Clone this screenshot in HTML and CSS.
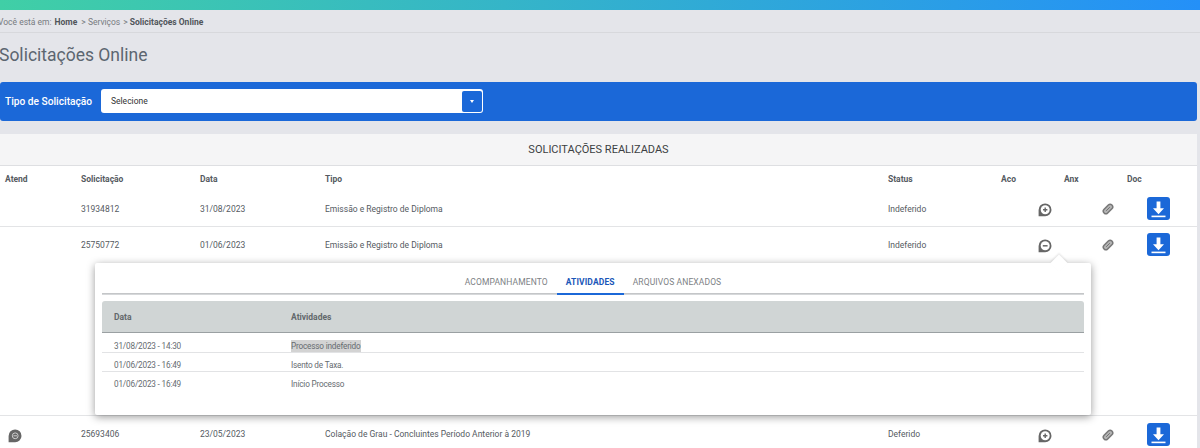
FILE: index.html
```html
<!DOCTYPE html>
<html lang="pt-BR">
<head>
<meta charset="utf-8">
<title>Solicitações Online</title>
<link rel="stylesheet" href="styles.css">
</head>
<body>
<svg class="defs" width="0" height="0" aria-hidden="true">
  <defs>
    <symbol id="clip" viewBox="0 0 16 16">
      <g transform="rotate(-45 8 8)">
        <rect x="0.6" y="4.6" width="14.8" height="6.8" rx="3.4" fill="#b4b4b4" stroke="#777" stroke-width="2"/>
        <path d="M4.5 8h7" stroke="#6f6f6f" stroke-width="1.2"/>
      </g>
    </symbol>
    <symbol id="dl" viewBox="0 0 23 23">
      <rect width="23" height="23" rx="3" fill="#1b68d8"/>
      <path d="M9.6 4.5h3.8v6.7h3.6l-5.5 6-5.5-6h3.6z" fill="#fff"/>
      <rect x="4.5" y="18.6" width="14" height="1.6" fill="#fff"/>
    </symbol>
    <symbol id="plus" viewBox="0 0 14 14">
      <path d="M7.2 .4a6.4 6.4 0 1 1-.2 12.8H.6V7A6.5 6.5 0 0 1 7.2 .4z" fill="#666"/>
      <circle cx="7.2" cy="6.8" r="4.5" fill="#fff"/>
      <path d="M5 6.8h4.4M7.2 4.6V9" stroke="#666" stroke-width="1.4"/>
    </symbol>
    <symbol id="minus" viewBox="0 0 14 14">
      <path d="M7.2 .4a6.4 6.4 0 1 1-.2 12.8H.6V7A6.5 6.5 0 0 1 7.2 .4z" fill="#666"/>
      <circle cx="7.2" cy="6.8" r="4.5" fill="#fff"/>
      <path d="M4.8 6.8h4.8" stroke="#666" stroke-width="1.5"/>
    </symbol>
    <symbol id="atend" viewBox="0 0 14 14">
      <path d="M7.2 .4a6.4 6.4 0 1 1-.2 12.8H.6V7A6.5 6.5 0 0 1 7.2 .4z" fill="#666"/>
      <circle cx="7.2" cy="6.8" r="2.9" fill="none" stroke="#ccc" stroke-width="1"/>
      <path d="M5.4 6.8h3.6" stroke="#ccc" stroke-width="1"/>
    </symbol>
  </defs>
</svg>

<div class="topbar"></div>

<nav class="crumbs">
  <span>Você está em:</span>
  <strong class="crumb-home">Home</strong>
  <span>&gt; Serviços</span>
  <span>&gt; <strong>Solicitações Online</strong></span>
</nav>

<h1 class="title">Solicitações Online</h1>

<section class="filter">
  <label class="filter-label">Tipo de Solicitação</label>
  <div class="select">
    <span class="select-text">Selecione</span>
    <span class="select-btn"><i class="caret"></i></span>
  </div>
</section>

<section class="panel">
  <h2 class="panel-head">SOLICITAÇÕES REALIZADAS</h2>

  <div class="row row-head">
    <span>Atend</span><span>Solicitação</span><span>Data</span><span>Tipo</span><span>Status</span><span>Aco</span><span>Anx</span><span>Doc</span>
  </div>

  <div class="row row-body row-first">
    <span></span><span>31934812</span><span>31/08/2023</span><span>Emissão e Registro de Diploma</span><span>Indeferido</span>
    <svg class="ic-bubble"><use href="#plus"/></svg>
    <svg class="ic-clip"><use href="#clip"/></svg>
    <svg class="ic-dl"><use href="#dl"/></svg>
  </div>

  <div class="row row-body row-open">
    <span></span><span>25750772</span><span>01/06/2023</span><span>Emissão e Registro de Diploma</span><span>Indeferido</span>
    <svg class="ic-bubble"><use href="#minus"/></svg>
    <svg class="ic-clip"><use href="#clip"/></svg>
    <svg class="ic-dl"><use href="#dl"/></svg>
  </div>

  <div class="detail">
    <i class="arrow"></i>
    <div class="tabs">
      <span class="tab">ACOMPANHAMENTO</span>
      <span class="tab tab-active">ATIVIDADES</span>
      <span class="tab">ARQUIVOS ANEXADOS</span>
    </div>
    <div class="act act-head"><span>Data</span><span>Atividades</span></div>
    <div class="act act-row"><span>31/08/2023 - 14:30</span><span><mark>Processo indeferido</mark></span></div>
    <div class="act act-row"><span>01/06/2023 - 16:49</span><span>Isento de Taxa.</span></div>
    <div class="act act-row act-last"><span>01/06/2023 - 16:49</span><span>Início Processo</span></div>
  </div>

  <div class="row row-body row-last">
    <svg class="ic-atend"><use href="#atend"/></svg>
    <span>25693406</span><span>23/05/2023</span><span>Colação de Grau - Concluintes Período Anterior à 2019</span><span>Deferido</span>
    <svg class="ic-bubble"><use href="#plus"/></svg>
    <svg class="ic-clip"><use href="#clip"/></svg>
    <svg class="ic-dl"><use href="#dl"/></svg>
  </div>
</section>
</body>
</html>
```
FILE: styles.css
```css
* { box-sizing: border-box; }
html, body { height: 100%; }
body {
  margin: 0;
  background: #e4e5ea;
  font-family: Roboto, "Liberation Sans", sans-serif;
  color: #555a5f;
  overflow: hidden;
}
.defs { display: block; height: 0; }
.topbar {
  height: 10px;
  background: linear-gradient(90deg, #40cfa6 0%, #35b5c8 42%, #2490f8 100%);
}
.crumbs {
  height: 23px;
  display: flex;
  align-items: center;
  gap: 3px;
  padding-top: 2px;
  border-bottom: 1px solid #d7d8dc;
  font-size: 8.5px;
  color: #777b80;
  margin-left: -2px;
}
.crumbs strong { color: #50555a; font-weight: 700; }
.crumbs .crumb-home { margin-right: 1px; }
.title {
  margin: 0 0 0 -1px;
  height: 49px;
  display: flex;
  align-items: center;
  padding-bottom: 6px;
  font-size: 17.5px;
  font-weight: 400;
  color: #5c6670;
}
.filter {
  width: 1197px;
  height: 39px;
  display: flex;
  align-items: center;
  padding-left: 5px;
  background: #1b68d8;
  border-radius: 3px;
}
.filter-label { color: #fff; font-size: 10.2px; font-weight: 500; width: 95px; white-space: nowrap; }
.select {
  width: 382px;
  height: 24px;
  margin-left: 1px;
  display: flex;
  align-items: center;
  justify-content: space-between;
  background: #fff;
  border-radius: 3px;
  padding-left: 10px;
  margin-top: -1px;
}
.select-text { font-size: 8.5px; color: #333; margin-top: -1px; }
.select-btn {
  width: 20px;
  height: 21px;
  margin-right: 1px;
  display: flex;
  align-items: center;
  justify-content: center;
  background: #1b68d8;
  border-radius: 2px;
}
.caret {
  width: 0;
  height: 0;
  border-left: 2.5px solid transparent;
  border-right: 2.5px solid transparent;
  border-top: 3px solid #fff;
}
.panel {
  width: 1197px;
  margin-top: 13px;
  background: #fff;
  border-radius: 3px 3px 0 0;
}
.panel-head {
  margin: 0;
  height: 32px;
  display: flex;
  align-items: center;
  justify-content: center;
  background: #f5f5f6;
  border-bottom: 1px solid #dedfe2;
  font-size: 11px;
  font-weight: 400;
  color: #3c3f42;
}
.row {
  display: grid;
  padding-left: 5px;
  align-items: center;
  font-size: 8.5px;
}
.row-head {
  grid-template-columns: 76px 119px 125px 563px 113px 63px 63px 1fr;
  height: 25px;
  padding-top: 1px;
  font-weight: 700;
  color: #555a5f;
}
.row-body { grid-template-columns: 76px 119px 125px 563px 150px 64px 45px 1fr; color: #555a5f; }
.row-first { height: 36px; border-bottom: 1px solid #e3e4e6; }
.row-open { height: 36px; padding-bottom: 1px; }
.row-last { height: 37px; border-top: 1px solid #e3e4e6; }
.ic-bubble { width: 14px; height: 14px; margin-top: 3px; }
.ic-clip { width: 12px; height: 12px; margin-top: 1px; }
.ic-dl { width: 23px; height: 23px; }
.ic-atend { width: 14px; height: 14px; margin: 3px 0 0 3px; }
.detail {
  position: relative;
  width: 996px;
  height: 152px;
  margin-left: 95px;
  padding: 0 7px;
  background: #fff;
  border-radius: 2px;
  box-shadow: 0 2px 8px rgba(0, 0, 0, .4);
}
.arrow {
  position: absolute;
  top: -6px;
  left: 958px;
  width: 12px;
  height: 12px;
  background: #fff;
  transform: rotate(45deg);
  box-shadow: -1px -1px 2px rgba(0, 0, 0, .1);
}
.tabs {
  position: relative;
  height: 31px;
  display: flex;
  justify-content: center;
  border-bottom: 1px solid #c4c6c8;
  box-shadow: 0 1px 0 #d6d8da;
}
.tab {
  display: flex;
  align-items: center;
  padding: 7px 9px 0;
  font-size: 8.5px;
  color: #7d8184;
  letter-spacing: .12px;
}
.tab-active {
  height: 32px;
  color: #1a56b8;
  font-weight: 700;
  border-bottom: 2px solid #1b68d8;
}
.act {
  display: grid;
  grid-template-columns: 177px 1fr;
  padding-left: 12px;
  align-items: center;
  font-size: 8.2px;
  letter-spacing: -.18px;
}
.act-head {
  height: 32px;
  margin: 7px 0 1px;
  background: #d0d5d5;
  border-bottom: 1px solid #9aa0a2;
  border-radius: 3px 3px 0 0;
  font-size: 8.5px;
  letter-spacing: 0;
  font-weight: 700;
  color: #62686b;
}
.act-row {
  height: 19px;
  padding-top: 5px;
  color: #666b70;
  border-bottom: 1px solid #e2e3e5;
}
.act-last { border-bottom: 0; }
mark { background: #d3d3d3; color: inherit; padding: 1px 0; }
```
